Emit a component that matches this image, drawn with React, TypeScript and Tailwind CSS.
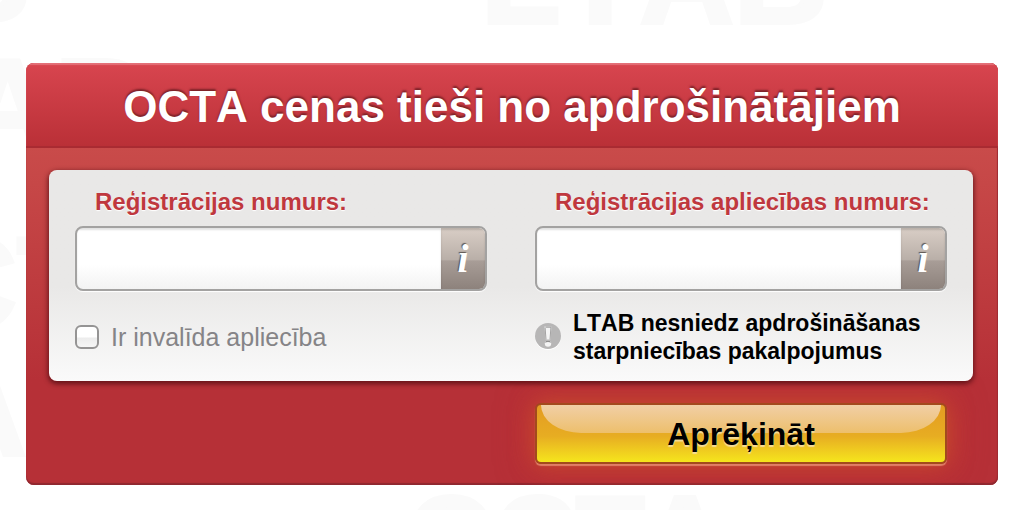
import { useId, useState } from "react";

const watermarks = [
  { text: "LTAB", place: "left-[481px] -top-[87px] text-[130px] leading-[130px]" },
  { text: "LTAB", place: "-left-[316px] -top-[89px] text-[130px] leading-[130px]" },
  { text: "LTAB", place: "-left-[198px] top-[40px] text-[130px] leading-[130px]" },
  { text: "OCTA", place: "-left-[178px] top-[218px] text-[130px] leading-[130px]" },
  { text: "OCTA", place: "-left-[342px] top-[345px] text-[130px] leading-[130px]" },
  { text: "OCTA", place: "left-[408px] top-[480px] text-[112px] leading-[112px]" },
];

function NumberField({ label }: { label: string }) {
  const id = useId();
  return (
    <div className="flex min-w-0 flex-col">
      <label
        htmlFor={id}
        className="px-5 text-2xl leading-8 font-bold whitespace-nowrap text-[#bf383e] [text-shadow:0_1px_1px_#ffffff]"
      >
        {label}
      </label>
      <div className="mt-2 flex h-[65px] overflow-hidden rounded-lg border-2 border-[#a3a2a1] bg-linear-to-b from-white from-60% to-[#f3f3f3] shadow-[0_1px_1px_#ffffff]">
        <input
          id={id}
          type="text"
          className="min-w-0 flex-1 bg-transparent px-3 text-2xl text-[#333333] shadow-[inset_0_2px_2px_rgba(0,0,0,0.12)] outline-none"
        />
        <button
          type="button"
          aria-label="Informācija"
          className="w-11 shrink-0 bg-[linear-gradient(#d9cec6_0%,#b9afa8_52%,#a89d97_54%,#8d827c_100%)] font-['Liberation_Serif',serif] text-[40px] leading-none font-bold text-white italic shadow-[inset_0_2px_2px_rgba(0,0,0,0.15)] [text-shadow:-1px_-1px_1px_#5c5551]"
        >
          i
        </button>
      </div>
    </div>
  );
}

function NoticeIcon() {
  return (
    <svg viewBox="0 0 28 28" className="size-7 shrink-0" aria-hidden="true">
      <circle cx="13" cy="14" r="13" fill="#ffffff" />
      <circle cx="13" cy="13" r="13" fill="#b7b6b6" />
      <path d="M9.5 3.5h7l-1 13h-5z" fill="#f4f4f4" />
      <path d="M9.5 3.5h7l-.1 1.2H9.6zM9.5 3.5l1 13h1l-1-13zM16.5 3.5l-1 13h-1l1-13z" fill="#a3a2a2" />
      <circle cx="13" cy="20.6" r="3.2" fill="#f4f4f4" />
      <path d="M9.9 19.8a3.2 3.2 0 0 1 6.2 0c-1.8-1.2-4.4-1.2-6.2 0z" fill="#8f8e8e" />
    </svg>
  );
}

export default function App() {
  const [disabled, setDisabled] = useState(false);
  return (
    <div className="relative min-h-screen overflow-hidden bg-white px-[26px] pt-[63px] pb-[26px] font-['Liberation_Sans',Arial,sans-serif] [font-kerning:none]">
      <div className="pointer-events-none absolute inset-0 overflow-hidden select-none" aria-hidden="true">
        {watermarks.map((mark, index) => (
          <span
            key={index}
            className={`absolute font-bold text-[#fafafa] [-webkit-text-stroke:4px_#fafafa] ${mark.place}`}
          >
            {mark.text}
          </span>
        ))}
      </div>

      <form
        className="relative overflow-hidden rounded-lg bg-linear-to-b from-[#c94b4a] from-20% to-[#b63037] to-75% shadow-[inset_0_-2px_1px_#8f2830,inset_-1px_0_1px_#a02c33]"
        onSubmit={(event) => event.preventDefault()}
      >
        <header className="flex h-[85px] items-center justify-center border-b-2 border-[#a92b32] bg-linear-to-b from-[#d8454f] to-[#ba3037] pt-1 shadow-[inset_0_2px_1px_#e47078]">
          <h1 className="text-[44px] leading-[52px] font-bold whitespace-nowrap text-white [text-shadow:0_-2px_2px_#7c2228]">
            OCTA cenas tieši no apdrošinātājiem
          </h1>
        </header>

        <div className="pt-[22px] pr-[25px] pb-[21px] pl-[23px]">
          <div className="relative z-10 grid grid-cols-2 gap-x-12 rounded-lg bg-linear-to-b from-[#e9e8e7] from-55% to-[#fafafa] px-[26px] pt-4 pb-4 shadow-[0_2px_5px_1px_rgba(75,10,15,0.75)]">
            <NumberField label="Reģistrācijas numurs:" />
            <NumberField label="Reģistrācijas apliecības numurs:" />
            <label className="mt-[18px] flex items-center gap-3 text-[25px] leading-7 whitespace-nowrap text-[#858487]">
              <input
                type="checkbox"
                checked={disabled}
                onChange={(event) => setDisabled(event.target.checked)}
                className="size-6 shrink-0 appearance-none rounded-md border-2 border-[#959494] bg-[linear-gradient(#ffffff_50%,#ececec_55%,#f6f6f6_100%)] checked:bg-[#bf383e]"
              />
              Ir invalīda apliecība
            </label>
            <div className="mt-[18px] flex items-center gap-2.5">
              <NoticeIcon />
              <p className="text-[23px] leading-7 font-bold whitespace-nowrap text-black">
                LTAB nesniedz apdrošināšanas
                <br />
                starpniecības pakalpojumus
              </p>
            </div>
          </div>

          <div className="mt-[22px] grid grid-cols-2 gap-x-12 px-[26px]">
            <button
              type="submit"
              className="relative col-start-2 h-[61px] rounded-md border-2 border-[#a34a1d] bg-linear-to-b from-[#e49b22] via-[#e7ad22] via-55% to-[#f5e51c] shadow-[0_2px_1px_rgba(236,150,120,0.75),0_0_24px_rgba(204,100,35,0.6),0_0_30px_8px_rgba(200,50,55,0.55)]"
            >
              <span className="absolute inset-x-1 top-0 h-7 rounded-b-[40px_28px] bg-linear-to-b from-[#f1cfa5] to-[#edbf6b]" />
              <span className="relative text-[32px] leading-9 font-bold text-black [text-shadow:0_2px_1px_#f5dc96]">
                Aprēķināt
              </span>
            </button>
          </div>
        </div>
      </form>
    </div>
  );
}
